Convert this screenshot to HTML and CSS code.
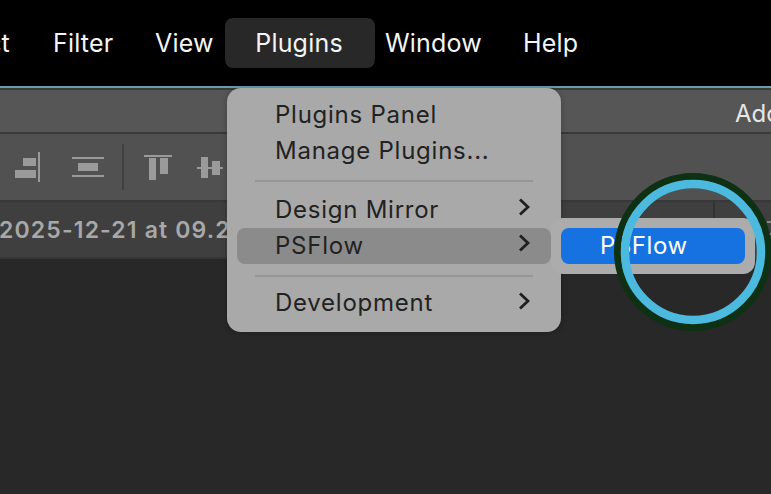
FILE: index.html
```html
<!DOCTYPE html>
<html lang="en">
<head>
<meta charset="utf-8">
<title>Plugins menu</title>
<link rel="stylesheet" href="styles.css">
</head>
<body>
<div class="screen">
  <nav class="menubar">
    <span class="mitem m-select">Select</span>
    <span class="mitem m-filter">Filter</span>
    <span class="mitem m-view">View</span>
    <span class="mitem m-plugins">Plugins</span>
    <span class="mitem m-window">Window</span>
    <span class="mitem m-help">Help</span>
  </nav>
  <div class="accent"></div>
  <div class="optionsbar"><span class="adobe">Adobe Photoshop</span></div>
  <div class="toolbar">
    <svg class="tools" width="230" height="66" viewBox="0 0 230 66">
      <g fill="#9a9a9a">
        <rect x="15" y="36" width="21" height="8"/>
        <rect x="23" y="24" width="13" height="8"/>
        <rect x="38" y="18" width="2" height="30"/>
        <rect x="72" y="23" width="32" height="2"/>
        <rect x="78" y="29" width="20" height="8"/>
        <rect x="72" y="41" width="32" height="2"/>
        <rect x="144" y="21" width="28" height="2"/>
        <rect x="149" y="24" width="7" height="22"/>
        <rect x="160" y="24" width="8" height="16"/>
        <rect x="197" y="33" width="26" height="2"/>
        <rect x="201" y="23" width="7" height="21"/>
        <rect x="212" y="27" width="8" height="14"/>
      </g>
      <rect x="122" y="10" width="2" height="46" fill="#404040"/>
    </svg>
  </div>
  <div class="tabbar">
    <span class="tabtitle">2025-12-21 at 09.28.41</span>
    <span class="tabrule"></span>
    <span class="tabmenu"></span>
  </div>
  <div class="canvas"></div>

  <div class="menu">
    <div class="row">Plugins Panel</div>
    <div class="row">Manage Plugins...</div>
    <div class="sep"></div>
    <div class="row">Design Mirror<svg class="chev" width="12" height="18" viewBox="0 0 12 18"><path d="M2 1.5l8 7.5-8 7.5"/></svg></div>
    <div class="row row-active">PSFlow<svg class="chev" width="12" height="18" viewBox="0 0 12 18"><path d="M2 1.5l8 7.5-8 7.5"/></svg></div>
    <div class="sep"></div>
    <div class="row row-last">Development<svg class="chev" width="12" height="18" viewBox="0 0 12 18"><path d="M2 1.5l8 7.5-8 7.5"/></svg></div>
  </div>

  <div class="submenu"><div class="subitem">PSFlow</div></div>

  <svg class="ring" width="160" height="160" viewBox="0 0 160 160">
    <circle cx="80" cy="80" r="75.5" fill="none" stroke="#0e3114" stroke-width="7"/>
    <circle cx="80" cy="80" r="68" fill="none" stroke="#4bbade" stroke-width="8.5"/>
  </svg>
</div>
</body>
</html>
```
FILE: styles.css
```css
* { box-sizing: border-box; }
html, body { margin: 0; padding: 0; background: #282828; }
.screen {
  position: relative;
  width: 771px;
  height: 494px;
  overflow: hidden;
  display: flex;
  flex-direction: column;
  font-family: Inter, "Liberation Sans", sans-serif;
}
.menubar {
  height: 86px;
  flex: none;
  background: #000;
  position: relative;
  color: #f4f4f4;
  font-size: 25px;
  letter-spacing: .2px;
}
.mitem { position: absolute; top: 18px; height: 50px; line-height: 50px; white-space: nowrap; }
.m-select { right: 761px; }
.m-filter { left: 53px; }
.m-view { left: 155px; }
.m-plugins { left: 224px; width: 150px; text-align: center; background: #282828; border-radius: 8px; margin-left: 1px; text-indent: -2px; }
.m-window { left: 385px; }
.m-help { left: 523px; }
.accent { height: 2px; flex: none; background: #6a9cae; }
.optionsbar {
  height: 46px;
  flex: none;
  background: #565656;
  border-top: 2px solid #3a3a3a;
  border-bottom: 2px solid #3a3a3a;
  position: relative;
}
.adobe {
  position: absolute;
  left: 735px;
  top: 9px;
  font-size: 24px;
  line-height: 30px;
  color: #e6e6e6;
  white-space: nowrap;
}
.toolbar { height: 66px; flex: none; background: #515151; }
.tools { display: block; }
.tabbar {
  height: 59px;
  flex: none;
  background: #3f3f3f;
  position: relative;
  border-top: 2px solid #383838;
  border-bottom: 2px solid #363636;
}
.tabtitle {
  position: absolute;
  left: -1px;
  top: 13px;
  font-weight: 600;
  font-size: 23px;
  letter-spacing: 1.15px;
  line-height: 30px;
  color: #a8a8a8;
  white-space: nowrap;
}
.tabrule { position: absolute; left: 713px; top: -2px; width: 2px; height: 20px; background: #333; }
.tabmenu {
  position: absolute;
  left: 767px;
  top: 19px;
  width: 12px;
  height: 14px;
  border-top: 2px solid #888;
  border-bottom: 2px solid #888;
}
.canvas { flex: 1; background: #282828; }
.menu {
  position: absolute;
  left: 227px;
  top: 88px;
  width: 334px;
  height: 244px;
  padding: 9px 10px;
  background: #a9a9a9;
  border-radius: 14px;
  box-shadow: 0 1px 6px rgba(0, 0, 0, .25);
  color: #222;
  font-size: 24px;
}
.row {
  position: relative;
  height: 36px;
  line-height: 35px;
  padding-left: 38px;
  letter-spacing: .75px;
  border-radius: 8px;
  white-space: nowrap;
}
.row-active { background: #8b8b8b; }
.sep { height: 2px; margin: 11px 18px 10px; background: #969696; }
.row-active + .sep { margin-bottom: 8px; }
.chev {
  position: absolute;
  left: 281px;
  top: 6px;
  fill: none;
  stroke: #1f1f1f;
  stroke-width: 2.8;
}
.row-last .chev { top: 7px; }
.submenu {
  position: absolute;
  left: 551px;
  top: 218px;
  width: 204px;
  height: 56px;
  padding: 10px;
  background: #acacac;
  border-radius: 12px;
}
.subitem {
  height: 36px;
  line-height: 36px;
  padding-left: 39px;
  background: #1572e0;
  border-radius: 8px;
  color: #fff;
  font-size: 24px;
  letter-spacing: .55px;
}
.ring { position: absolute; left: 613px; top: 172px; }
```
